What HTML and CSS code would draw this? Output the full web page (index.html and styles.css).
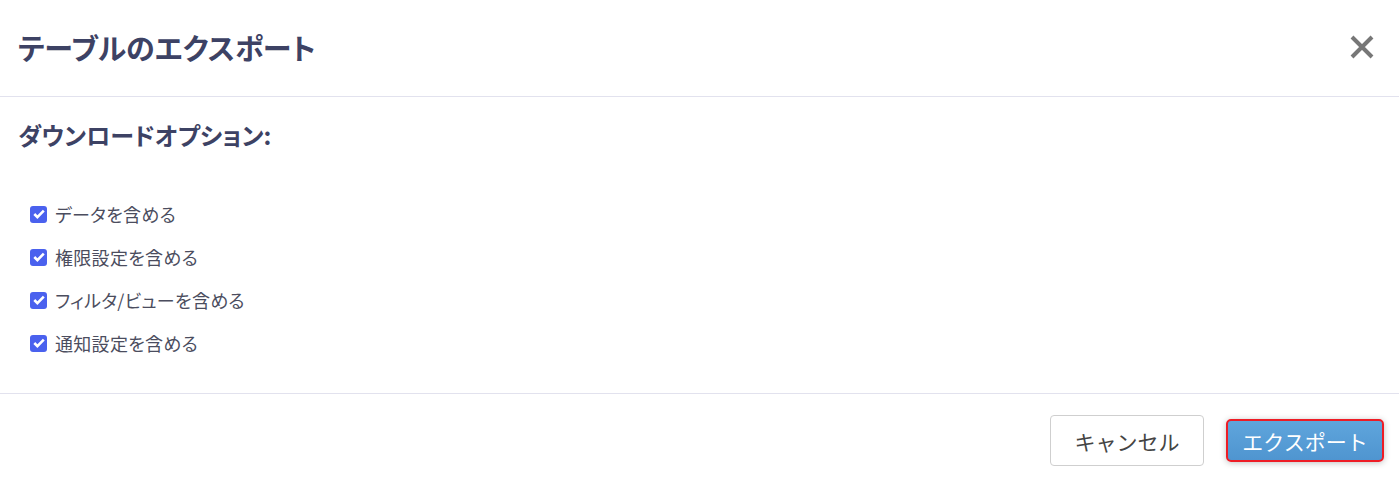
FILE: index.html
```html
<!DOCTYPE html>
<html lang="ja">
<head>
<meta charset="utf-8">
<title>テーブルのエクスポート</title>
<link rel="stylesheet" href="styles.css">
</head>
<body>
<div class="dialog">
  <header class="dlg-header">
    <h1 class="dlg-title">テーブルのエクスポート</h1>
    <button class="close" aria-label="閉じる">
      <svg width="26" height="26" viewBox="0 0 26 26"><path d="M3 3L23 23M23 3L3 23" stroke="#777" stroke-width="4" stroke-linecap="butt"/></svg>
    </button>
  </header>
  <section class="dlg-body">
    <h2 class="section-title">ダウンロードオプション:</h2>
    <ul class="options">
      <li class="option"><span class="cb"><svg width="12" height="10" viewBox="0 0 12 10"><path d="M1.3 5L4.4 8.1L10.8 1.6" fill="none" stroke="#fff" stroke-width="2.6"/></svg></span><span class="label">データを含める</span></li>
      <li class="option"><span class="cb"><svg width="12" height="10" viewBox="0 0 12 10"><path d="M1.3 5L4.4 8.1L10.8 1.6" fill="none" stroke="#fff" stroke-width="2.6"/></svg></span><span class="label">権限設定を含める</span></li>
      <li class="option"><span class="cb"><svg width="12" height="10" viewBox="0 0 12 10"><path d="M1.3 5L4.4 8.1L10.8 1.6" fill="none" stroke="#fff" stroke-width="2.6"/></svg></span><span class="label">フィルタ/ビューを含める</span></li>
      <li class="option"><span class="cb"><svg width="12" height="10" viewBox="0 0 12 10"><path d="M1.3 5L4.4 8.1L10.8 1.6" fill="none" stroke="#fff" stroke-width="2.6"/></svg></span><span class="label">通知設定を含める</span></li>
    </ul>
  </section>
  <footer class="dlg-footer">
    <button class="btn btn-cancel">キャンセル</button>
    <button class="btn btn-export">エクスポート</button>
  </footer>
</div>
</body>
</html>
```
FILE: styles.css
```css
html, body {
  margin: 0;
  padding: 0;
  background: #fff;
}
body {
  font-family: "Noto Sans CJK JP", "Noto Sans", sans-serif;
  color: #3e4262;
  font-feature-settings: "palt";
}
.dialog {
  width: 1399px;
  height: 487px;
  display: flex;
  flex-direction: column;
}
.dlg-header {
  height: 97px;
  box-sizing: border-box;
  border-bottom: 1px solid #e2e2ee;
  display: flex;
  align-items: center;
  justify-content: space-between;
  padding: 0 24px 2px 18px;
}
.dlg-title {
  margin: 0;
  font-size: 29px;
  font-weight: 700;
  color: #3d4264;
  line-height: 1;
}
.close {
  border: 0;
  background: none;
  padding: 0;
  width: 26px;
  height: 26px;
  display: flex;
  cursor: pointer;
}
.dlg-body {
  height: 297px;
  box-sizing: border-box;
  border-bottom: 1px solid #e2e2ee;
  padding: 20px 0 0 18px;
}
.section-title {
  margin: 0;
  font-size: 24px;
  font-weight: 700;
  color: #3d4264;
  line-height: 36px;
}
.options {
  list-style: none;
  margin: 48px 0 0 12px;
  padding: 0;
  display: flex;
  flex-direction: column;
  gap: 17px;
}
.option {
  display: flex;
  align-items: center;
  height: 26px;
  gap: 8px;
}
.cb {
  width: 17px;
  height: 17px;
  border-radius: 3px;
  background: #4a61ee;
  display: flex;
  align-items: center;
  justify-content: center;
}
.label {
  font-size: 18px;
  letter-spacing: 0.3px;
  color: #4b4d5e;
  line-height: 26px;
}
.dlg-footer {
  flex: 1;
  display: flex;
  align-items: center;
  justify-content: flex-end;
  gap: 22px;
  padding: 0 15px 0 0;
}
.btn {
  font-family: "Noto Sans CJK JP", "Noto Sans", sans-serif;
  font-size: 21px;
  cursor: pointer;
  box-sizing: border-box;
  font-feature-settings: normal;
  padding: 0;
}
.btn-cancel {
  width: 154px;
  height: 51px;
  border: 1px solid #cfcfcf;
  border-radius: 4px;
  background: #fff;
  color: #444;
}
.btn-export {
  width: 158px;
  height: 43px;
  border: 2px solid #ee1c25;
  border-radius: 5px;
  background: linear-gradient(#5fa5dc, #4f95d0);
  color: #fff;
  box-shadow: 0 1px 6px rgba(0,0,0,0.25);
}
```
